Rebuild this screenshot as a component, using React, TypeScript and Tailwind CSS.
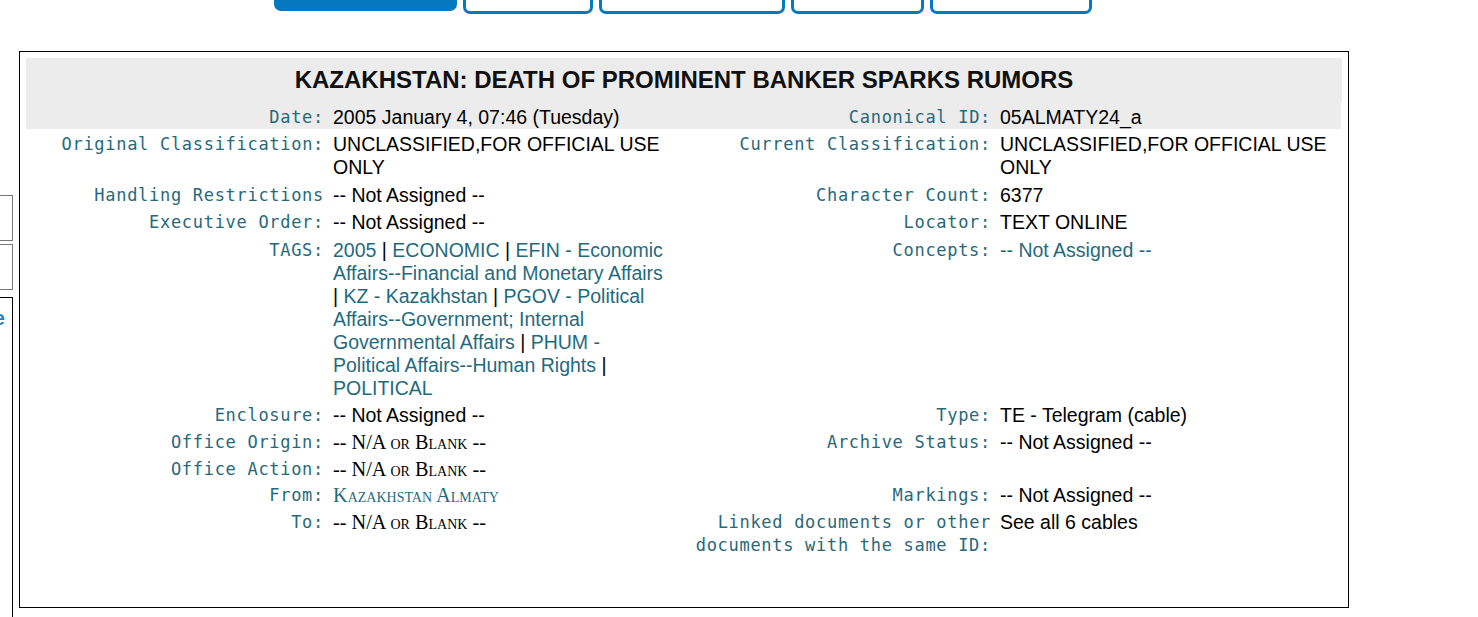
import React from "react";

const LABEL = "font-['DejaVu_Sans_Mono',monospace] text-[17px] tracking-[0.7px] text-[#27697a] text-right pr-[4px] leading-[23px]";
const VALUE = "font-['Liberation_Sans',Arial,sans-serif] text-[19.5px] text-black pl-[5px] leading-[23px]";
const LINK = "text-[#1f6b7e]";
const CAPS = "font-['Liberation_Serif',serif] [font-variant:small-caps] text-[20.3px] leading-[1]";

function NA() {
  return <span className={CAPS}>-- N/A or Blank --</span>;
}

type Cell = React.ReactNode;
type Row = { l1: Cell; v1: Cell; l2: Cell; v2: Cell; gray?: boolean; pad?: string };

const tags = [
  "2005",
  "ECONOMIC",
  "EFIN - Economic Affairs--Financial and Monetary Affairs",
  "KZ - Kazakhstan",
  "PGOV - Political Affairs--Government; Internal Governmental Affairs",
  "PHUM - Political Affairs--Human Rights",
  "POLITICAL",
];

const rows: Row[] = [
  {
    l1: "Date:",
    v1: "2005 January 4, 07:46 (Tuesday)",
    l2: "Canonical ID:",
    v2: "05ALMATY24_a",
    gray: true,
    pad: "pt-[4px] pb-0",
  },
  {
    l1: "Original Classification:",
    v1: "UNCLASSIFIED,FOR OFFICIAL USE ONLY",
    l2: "Current Classification:",
    v2: "UNCLASSIFIED,FOR OFFICIAL USE ONLY",
    pad: "pt-[4px] pb-[3px]",
  },
  { l1: "Handling Restrictions", v1: "-- Not Assigned --", l2: "Character Count:", v2: "6377" },
  { l1: "Executive Order:", v1: "-- Not Assigned --", l2: "Locator:", v2: "TEXT ONLINE", pad: "pt-[2px] pb-[3px]" },
  {
    l1: "TAGS:",
    v1: (
      <>
        {tags.map((t, i) => (
          <React.Fragment key={t}>
            <a className={LINK}>{t}</a>
            {i < tags.length - 1 ? " | " : ""}
          </React.Fragment>
        ))}
      </>
    ),
    l2: "Concepts:",
    v2: <a className={LINK}>-- Not Assigned --</a>,
  },
  { l1: "Enclosure:", v1: "-- Not Assigned --", l2: "Type:", v2: "TE - Telegram (cable)" },
  { l1: "Office Origin:", v1: <NA />, l2: "Archive Status:", v2: "-- Not Assigned --" },
  { l1: "Office Action:", v1: <NA />, l2: "", v2: "", pad: "pt-[2px] pb-[1px]" },
  {
    l1: "From:",
    v1: <a className={`${LINK} ${CAPS}`}>Kazakhstan Almaty</a>,
    l2: "Markings:",
    v2: "-- Not Assigned --",
  },
  {
    l1: "To:",
    v1: <NA />,
    l2: "Linked documents or other documents with the same ID:",
    v2: "See all 6 cables",
  },
];

export default function App() {
  const tabs = [183, 130, 186, 133, 162];
  return (
    <div className="h-[617px] w-[1478px] overflow-hidden bg-white">
      {/* top tabs, mostly scrolled out of view */}
      <div className="flex gap-[6px] pl-[274px] -mt-[20px]">
        {tabs.map((w, i) =>
          i === 0 ? (
            <div key={i} style={{ width: w }} className="h-[31px] rounded-b-[7px] bg-[#0479c2]" />
          ) : (
            <div
              key={i}
              style={{ width: w }}
              className="h-[34px] rounded-b-[7px] border-[3px] border-[#0479c2]"
            />
          )
        )}
      </div>

      <div className="flex items-start">
        {/* sidebar, scrolled off to the left */}
        <div className="w-[213px] -ml-[200px] shrink-0 mt-[181px] flex flex-col">
          <div className="h-[46px] border border-[#777]" />
          <div className="h-[46px] mt-[3px] border border-[#777]" />
          <div className="h-[400px] mt-[7px] border border-black pt-[5px] pr-[7px] text-right font-['Liberation_Sans',Arial,sans-serif] text-[20px] font-bold text-[#1b7fcf]">
            Archive
          </div>
        </div>

        {/* cable box */}
        <div className="ml-[6px] mt-[37px] w-[1330px] h-[557px] border border-black p-[6px]">
          <div className="bg-[#ececec] pt-[8px] pb-[8px] text-center font-['Liberation_Sans',Arial,sans-serif] text-[24px] leading-[28px] font-bold text-[#111]">
            KAZAKHSTAN: DEATH OF PROMINENT BANKER SPARKS RUMORS
          </div>
          <div className="grid grid-cols-[302px_340px_327px_346px]">
            {rows.map((r, i) => {
              const cls = `${r.gray ? "bg-[#ececec]" : ""} ${r.pad ?? "pt-[2px] pb-[2px]"}`;
              return (
                <React.Fragment key={i}>
                  <div className={`${LABEL} ${cls}`}>{r.l1}</div>
                  <div className={`${VALUE} ${cls}`}>{r.v1}</div>
                  <div className={`${LABEL} ${cls}`}>{r.l2}</div>
                  <div className={`${VALUE} ${cls}`}>{r.v2}</div>
                </React.Fragment>
              );
            })}
          </div>
        </div>
      </div>
    </div>
  );
}
